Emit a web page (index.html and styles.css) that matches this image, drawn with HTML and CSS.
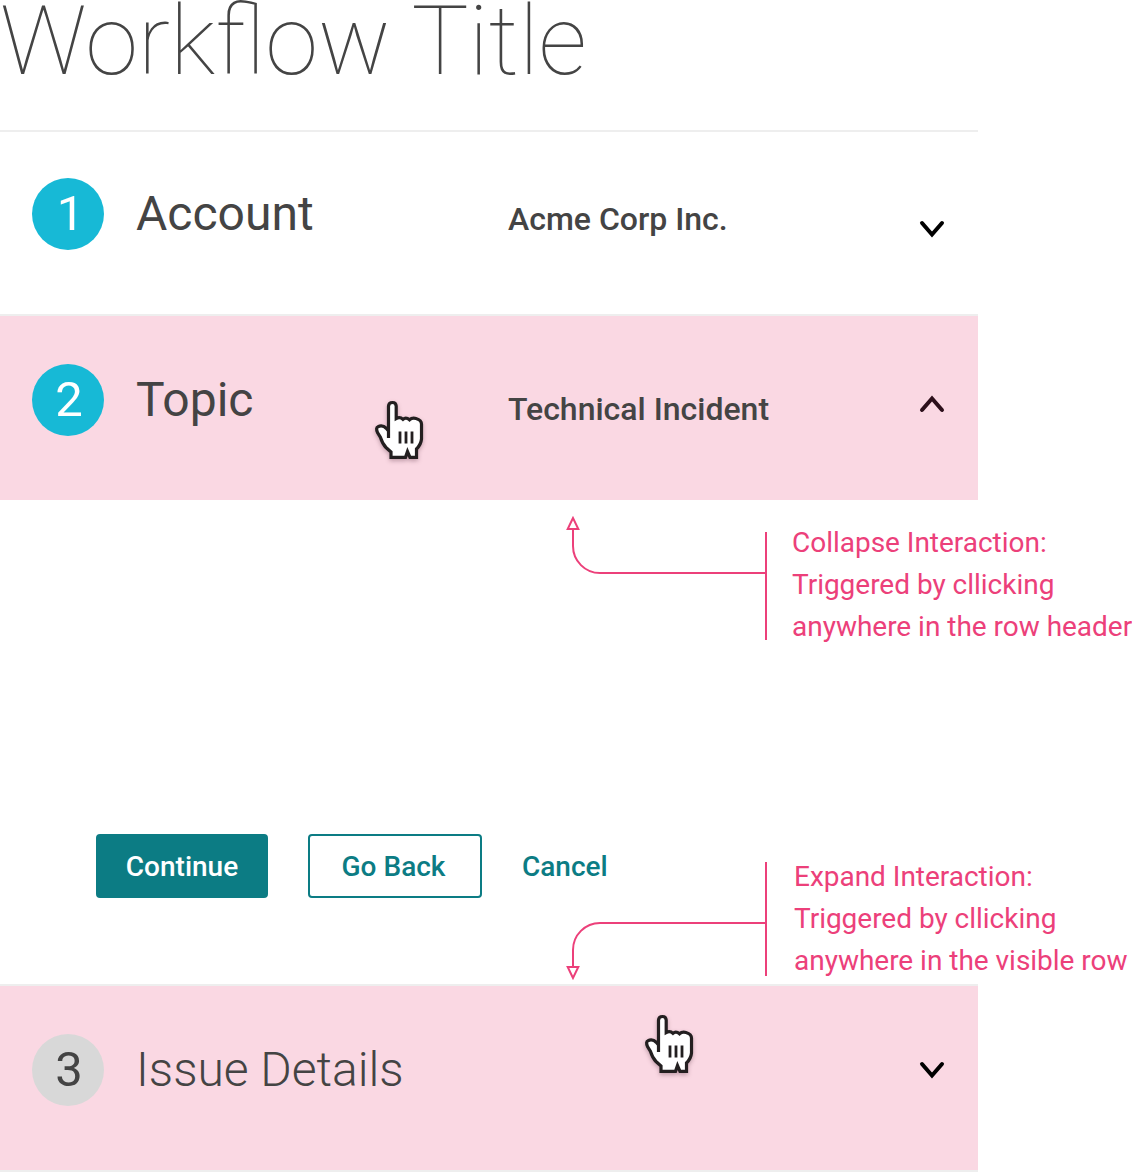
FILE: index.html
```
<!DOCTYPE html>
<html lang="en">
<head>
<meta charset="utf-8">
<title>Workflow Title</title>
<link rel="stylesheet" href="styles.css">
</head>
<body>
<svg class="defs" aria-hidden="true">
  <symbol id="hand" viewBox="0 0 80 80">
    <path class="hand-shape" d="M28.500 48V16.200Q28.700 12.500 32.500 12.500Q36 12.500 36.200 16.200V28.500Q40 26.500 43 29.300Q46 26.800 49.500 29.800Q52 27.500 56 28.500Q61.500 30 61.500 34V49Q61 54.500 56.500 59V67.300H50L47.500 61.500L45.500 67.300H31V62L26 57.500Q22.500 54 20.500 47.500L17.500 42.500Q15.500 37.500 18 36.700Q22.500 34.500 26.500 38.500L28.500 41Z"/>
    <path class="hand-lines" d="M40 41.500V53.500M46 41.500V53.500M52 41.500V53.500"/>
  </symbol>
</svg>
<main class="workflow">
  <h1 class="title">Workflow Title</h1>

  <section class="step step-first">
    <span class="badge badge-one">1</span>
    <h2 class="name">Account</h2>
    <span class="value">Acme Corp Inc.</span>
    <svg class="chevron" viewBox="0 0 28 20"><path d="M4 4L14 15.500L24 4"/></svg>
  </section>

  <section class="step step-active">
    <span class="badge">2</span>
    <h2 class="name">Topic</h2>
    <span class="value">Technical Incident</span>
    <svg class="chevron chevron-tint" viewBox="0 0 28 20"><path d="M4 16L14 4.500L24 16"/></svg>
    <svg class="hand hand-collapse" viewBox="0 0 80 80"><use href="#hand"/></svg>
  </section>

  <div class="step-body">
    <aside class="note note-collapse">
      <svg class="arrow arrow-up" viewBox="0 0 202 62"><path d="M199 58H34A27 27 0 0 1 7 31V14M7 3L1.700 14H12.300Z"/></svg>
      <p class="note-text">Collapse Interaction:<br>Triggered by cllicking<br>anywhere in the row header</p>
    </aside>
    <div class="footer">
      <div class="actions">
        <button class="btn btn-primary">Continue</button>
        <button class="btn btn-outline">Go Back</button>
        <button class="btn btn-link">Cancel</button>
      </div>
      <aside class="note note-expand">
        <svg class="arrow arrow-down" viewBox="0 0 202 62"><path d="M199 4H34A27 27 0 0 0 7 31V48M7 59L1.700 48H12.300Z"/></svg>
        <p class="note-text">Expand Interaction:<br>Triggered by cllicking<br>anywhere in the visible row</p>
      </aside>
    </div>
  </div>

  <section class="step step-active step-last">
    <span class="badge badge-idle">3</span>
    <h2 class="name name-light">Issue Details</h2>
    <span class="value"></span>
    <svg class="chevron" viewBox="0 0 28 20"><path d="M4 4L14 15.500L24 4"/></svg>
    <svg class="hand hand-expand" viewBox="0 0 80 80"><use href="#hand"/></svg>
  </section>
</main>
</body>
</html>
```
FILE: styles.css
```
* { box-sizing: border-box; }
body {
  margin: 0;
  background: #fff;
  color: #444;
  font-family: Roboto, "Liberation Sans", sans-serif;
  overflow: hidden;
}
.defs { display: none; }
.workflow { width: 978px; height: 1172px; }
.title {
  margin: 0;
  height: 130px;
  font-size: 95.8px;
  font-weight: 100;
  line-height: 82px;
  white-space: nowrap;
}
.step {
  position: relative;
  display: grid;
  grid-template-columns: 72px 339px 410px 28px;
  column-gap: 33px;
  align-items: start;
  height: 186px;
  padding: 48px 0 0 32px;
  border-top: 2px solid #eee;
}
.step-first { height: 184px; padding-top: 46px; }
.step-active { background: #fad8e3; }
.step-last { height: 188px; border-bottom: 2px solid #eee; }
.badge {
  height: 72px;
  border-radius: 50%;
  background: #17b9d6;
  color: #fff;
  font-size: 49px;
  line-height: 72px;
  padding-left: 2px;
  text-align: center;
}
.badge-one { padding-left: 5px; }
.badge-idle { background: #d8d8d8; color: #444; }
.name {
  margin: 0 0 0 -1px;
  font-size: 48px;
  font-weight: 400;
  line-height: 72px;
}
.name-light { font-weight: 300; }
.value {
  margin-left: -1px;
  padding-top: 22px;
  font-size: 32px;
  font-weight: 500;
  line-height: 38px;
}
.step-active .value { padding-top: 26px; }
.chevron {
  width: 28px;
  height: 20px;
  margin: 41px 0 0 -34px;
  fill: none;
  stroke: #000;
  stroke-width: 4;
  stroke-linecap: round;
}
.step-active .chevron { margin-top: 26px; }
.step-active .chevron-tint { stroke: #2c0f1b; margin-top: 30px; }
.hand {
  position: absolute;
  width: 80px;
  height: 80px;
  filter: drop-shadow(0 2px 2px rgba(60, 20, 35, 0.3));
}
.hand-shape { fill: #fff; stroke: #231f20; stroke-width: 3.2; }
.hand-lines { fill: none; stroke: #231f20; stroke-width: 2.8; }
.hand-collapse { left: 360px; top: 74px; }
.hand-expand { left: 630px; top: 18px; }
.step-body {
  display: flex;
  flex-direction: column;
  justify-content: space-between;
  height: 484px;
  padding: 32px 0 8px;
}
.note {
  position: relative;
  flex: none;
  margin-left: 765px;
  width: 367px;
  height: 108px;
  padding-left: 25px;
  border-left: 2px solid #ec407a;
  color: #ec407a;
}
.note-text {
  margin: -10px 0 0;
  font-size: 28px;
  line-height: 42px;
  letter-spacing: -0.02px;
  white-space: nowrap;
}
.note-expand { margin-left: 0; height: 114px; padding-left: 27px; }
.note-expand .note-text { margin-top: -6px; }
.arrow {
  position: absolute;
  left: -201px;
  width: 202px;
  height: 62px;
  fill: none;
  stroke: #ec407a;
  stroke-width: 2;
}
.arrow-up { top: -17px; }
.arrow-down { top: 57px; }
.footer { display: flex; align-items: flex-end; height: 142px; }
.actions {
  flex: none;
  display: flex;
  align-self: flex-start;
  gap: 40px;
  width: 765px;
  padding-left: 96px;
}
.btn {
  height: 64px;
  padding: 2px 0 0;
  border: 2px solid transparent;
  border-radius: 4px;
  background: none;
  color: #0c7c84;
  font: 500 28px/58px Roboto, "Liberation Sans", sans-serif;
}
.btn-primary { width: 172px; background: #0c7c84; border-color: #0c7c84; color: #fff; }
.btn-outline { width: 174px; padding-right: 3px; border-color: #0c7c84; }
.btn-link { border-width: 2px 0; }
```
